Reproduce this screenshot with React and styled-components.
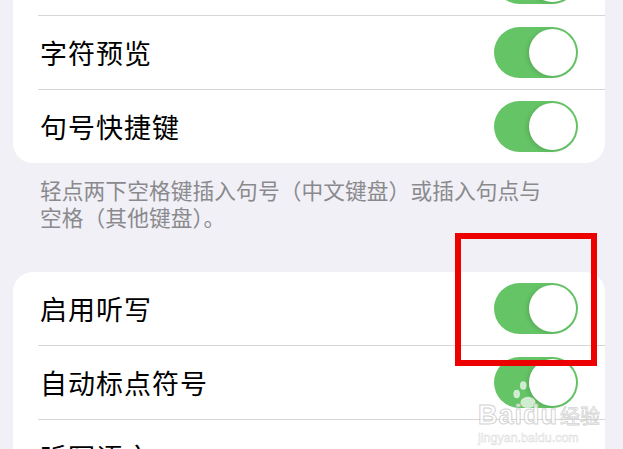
import React from "react";
import styled, { createGlobalStyle } from "styled-components";

const GlobalStyle = createGlobalStyle`
  html, body {
    margin: 0;
    padding: 0;
    background: #f1f0f6;
    overflow: hidden;
  }
  body {
    font-family: "Noto Sans CJK SC", "Noto Sans", sans-serif;
  }
`;

const Screen = styled.div`
  position: relative;
  width: 623px;
  height: 449px;
  overflow: hidden;
  background: #f1f0f6;
`;

const Scroller = styled.div`
  margin-top: -58px;
  padding: 0 18px 0 13px;
  display: flex;
  flex-direction: column;
`;

const Card = styled.div`
  background: #ffffff;
  border-radius: 20px;
  padding-left: 25px;
  margin-top: ${(p) => p.$top || 0}px;
`;

const Row = styled.div`
  height: 73px;
  display: flex;
  align-items: center;
  justify-content: space-between;
  padding-right: 27px;
  border-bottom: ${(p) => (p.$last ? "none" : "1px solid #d6d6da")};
`;

const Label = styled.span`
  font-size: 27px;
  color: #000;
  letter-spacing: 1px;
  padding-left: 2px;
`;

const Switch = styled.div`
  width: 84px;
  height: 51px;
  border-radius: 26px;
  background: #65c466;
  display: flex;
  align-items: center;
  justify-content: flex-end;
  padding-right: 2px;
  box-sizing: border-box;
`;

const Knob = styled.div`
  width: 47px;
  height: 47px;
  border-radius: 50%;
  background: #fff;
  box-shadow: -2px 1px 4px rgba(0, 0, 0, 0.12);
`;

const Chevron = styled.span`
  font-size: 30px;
  color: #c4c4c7;
  margin-right: 6px;
`;

const Footnote = styled.p`
  margin: 0;
  padding: 13px 30px 0 27px;
  font-size: 21.7px;
  line-height: 27px;
  color: #8a8a8e;
  letter-spacing: 0.1px;
`;

const Highlight = styled.div`
  position: absolute;
  left: 455px;
  top: 233px;
  width: 142px;
  height: 133px;
  box-sizing: border-box;
  border: 6px solid #ec0000;
`;

const Watermark = styled.div`
  position: absolute;
  left: 478px;
  top: 378px;
  display: flex;
  flex-direction: column;
  align-items: flex-start;
  white-space: nowrap;
  pointer-events: none;
`;

const MarkLine = styled.div`
  display: flex;
  align-items: flex-end;
  gap: 2px;
`;

const MarkBig = styled.span`
  font-family: "Liberation Sans", Arial, sans-serif;
  font-size: 27px;
  font-weight: bold;
  color: rgba(255, 255, 255, 0.75);
  -webkit-text-stroke: 1px rgba(190, 190, 190, 0.7);
  letter-spacing: 1px;
  line-height: 26px;
`;

const MarkCn = styled.span`
  font-size: 20px;
  color: rgba(255, 255, 255, 0.75);
  -webkit-text-stroke: 0.8px rgba(190, 190, 190, 0.7);
  line-height: 24px;
`;

const MarkUrl = styled.span`
  font-family: "Liberation Sans", Arial, sans-serif;
  font-size: 12.5px;
  color: rgba(255, 255, 255, 0.8);
  -webkit-text-stroke: 0.5px rgba(190, 190, 190, 0.6);
  margin-top: 3px;
`;

function Toggle() {
  return (
    <Switch>
      <Knob />
    </Switch>
  );
}

function Paw() {
  return (
    <svg width="40" height="32" viewBox="0 0 40 34" style={{ marginLeft: 30, marginBottom: -8 }}>
      <g fill="rgba(255,255,255,0.7)">
        <ellipse cx="8" cy="17" rx="3.5" ry="4.5" />
        <ellipse cx="15" cy="8" rx="3.5" ry="4.5" />
        <ellipse cx="25" cy="8" rx="3.5" ry="4.5" />
        <ellipse cx="31" cy="17" rx="3.5" ry="4.5" />
        <ellipse cx="20" cy="26" rx="8" ry="6" />
      </g>
    </svg>
  );
}

const rowsTop = [
  { label: "", toggle: true },
  { label: "字符预览", toggle: true },
  { label: "句号快捷键", toggle: true },
];

const rowsBottom = [
  { label: "启用听写", toggle: true },
  { label: "自动标点符号", toggle: true },
  { label: "听写语言", toggle: false },
];

export default function App() {
  return (
    <Screen>
      <GlobalStyle />
      <Scroller>
        <Card>
          {rowsTop.map((r, i) => (
            <Row key={i} $last={i === rowsTop.length - 1}>
              <Label>{r.label}</Label>
              <Toggle />
            </Row>
          ))}
        </Card>
        <Footnote>
          轻点两下空格键插入句号（中文键盘）或插入句点与
          <br />
          空格（其他键盘）。
        </Footnote>
        <Card $top={42}>
          {rowsBottom.map((r, i) => (
            <Row key={i} $last={i === rowsBottom.length - 1}>
              <Label>{r.label}</Label>
              {r.toggle ? <Toggle /> : <Chevron>›</Chevron>}
            </Row>
          ))}
        </Card>
      </Scroller>
      <Highlight />
      <Watermark>
        <Paw />
        <MarkLine>
          <MarkBig>Baidu</MarkBig>
          <MarkCn>经验</MarkCn>
        </MarkLine>
        <MarkUrl>jingyan.baidu.com</MarkUrl>
      </Watermark>
    </Screen>
  );
}
